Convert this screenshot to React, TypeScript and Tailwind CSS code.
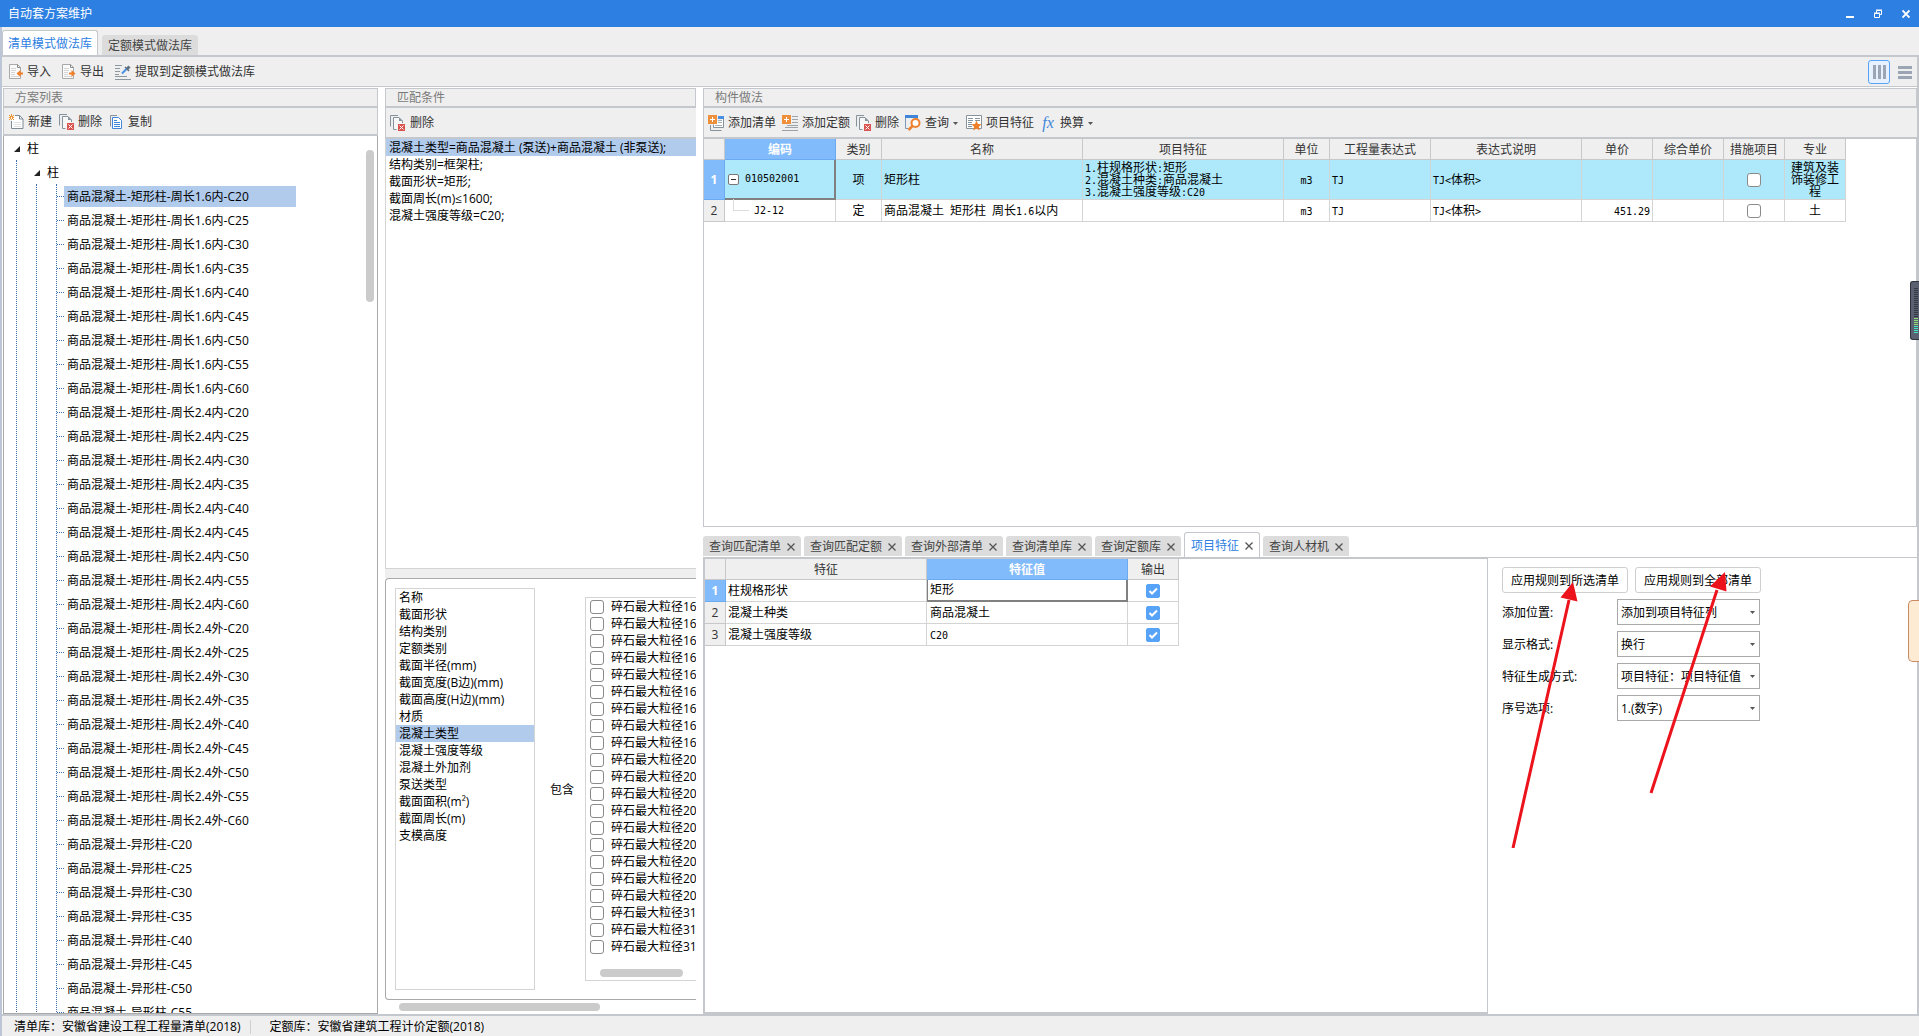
import { ReactNode } from "react";

const grades = ["C20", "C25", "C30", "C35", "C40", "C45", "C50", "C55", "C60"];

const schemes = [
  ...grades.map((g) => `商品混凝土-矩形柱-周长1.6内-${g}`),
  ...grades.map((g) => `商品混凝土-矩形柱-周长2.4内-${g}`),
  ...grades.map((g) => `商品混凝土-矩形柱-周长2.4外-${g}`),
  ...grades.slice(0, 8).map((g) => `商品混凝土-异形柱-${g}`),
];

const conditions = [
  "混凝土类型=商品混凝土 (泵送)+商品混凝土 (非泵送);",
  "结构类别=框架柱;",
  "截面形状=矩形;",
  "截面周长(m)≤1600;",
  "混凝土强度等级=C20;",
];

const attributes = [
  "名称",
  "截面形状",
  "结构类别",
  "定额类别",
  "截面半径(mm)",
  "截面宽度(B边)(mm)",
  "截面高度(H边)(mm)",
  "材质",
  "混凝土类型",
  "混凝土强度等级",
  "混凝土外加剂",
  "泵送类型",
  "截面面积(m²)",
  "截面周长(m)",
  "支模高度",
];

const aggregates = [
  ...Array(9).fill("碎石最大粒径16"),
  ...Array(9).fill("碎石最大粒径20"),
  ...Array(3).fill("碎石最大粒径31"),
];

const queryTabs = [
  { name: "查询匹配清单" },
  { name: "查询匹配定额" },
  { name: "查询外部清单" },
  { name: "查询清单库" },
  { name: "查询定额库" },
  { name: "项目特征", active: true },
  { name: "查询人材机" },
];

const features = [
  { id: 1, name: "柱规格形状", value: "矩形" },
  { id: 2, name: "混凝土种类", value: "商品混凝土" },
  { id: 3, name: "混凝土强度等级", value: "C20" },
];

const options = [
  { id: "position", label: "添加位置:", value: "添加到项目特征列" },
  { id: "format", label: "显示格式:", value: "换行" },
  { id: "mode", label: "特征生成方式:", value: "项目特征：项目特征值" },
  { id: "order", label: "序号选项:", value: "1.(数字)" },
];

const head = "h-[21px] border-r border-b border-[#c8c8c8] bg-[#efefef] pt-0.5 font-normal text-[#333]";
const headOn = "h-[21px] border-r border-b border-[#6aaaf0] bg-[#82bbfb] pt-0.5 font-bold text-white";
const cell = "border-r border-b border-[#d4d4d4]";

/* Grid text: half-width characters take half a cell, like a fixed pitch font */
function Grid({ children }: { children: string }) {
  return (
    <>
      {children.split(/([\x20-\x7e]+)/).map((part, i) =>
        i % 2 ? (
          <span key={i} className="font-['DejaVu_Sans_Mono',monospace] text-[10px] leading-2 whitespace-pre">
            {part}
          </span>
        ) : (
          part
        )
      )}
    </>
  );
}

function Icon({ children, w = 16 }: { children: ReactNode; w?: number }) {
  return (
    <svg width={w} height="16" viewBox={`0 0 ${w} 16`} fill="none" className="shrink-0" aria-hidden="true">
      {children}
    </svg>
  );
}

function ImportIcon({ out = false }: { out?: boolean }) {
  return (
    <Icon w={14}>
      <path d="M.5 .5h8l3 3v11H.5z" fill="#fafafa" stroke="#a9a9a9" />
      <path d="M8.5 .5v3h3" stroke="#8a8a8a" />
      <path d="M2 4.5h5M2 6.5h5M2 8.5h4M2 10.5h4M2 12.5h8" stroke="#d5d5d5" />
      {out ? (
        <path d="M7 8.500h2.500V6L13.500 9.500l-4 3.500v-2.500H7z" fill="#f07f2a" />
      ) : (
        <path d="M14 8.500h-2.500V6L7.500 9.500l4 3.500v-2.500H14z" fill="#f07f2a" />
      )}
    </Icon>
  );
}

function ExtractIcon() {
  return (
    <Icon>
      <path d="M0 1.500h7M0 4.500h5M0 7.500h5M0 10.500h4M0 12.500h12M0 15.500h16" stroke="#8d979f" />
      <path d="M7 9.500 11.500 5" stroke="#4a90e2" strokeWidth="2" />
      <path d="m10 3 4 4" stroke="#5f707e" strokeWidth="1.500" />
      <path d="M12 5l2.500-2.500" stroke="#5f707e" strokeWidth="3" />
    </Icon>
  );
}

function NewIcon() {
  return (
    <Icon w={15}>
      <path d="M6 1.500h4.500l3.500 3.500v9.500H2.500V7" fill="#fff" stroke="#7d8b95" />
      <path d="M10.500 1.500V5H14" stroke="#7d8b95" />
      <path d="M4.500 8.500H12M4.500 10.500H12M4.500 12.500H12" stroke="#dde1e4" />
      <path d="M0 1h1v1H0zM2 0h1v2H2zM4 1h1v1H4zM1 2h3v1H1zM0 3h2v1H0zM3 3h2v1H3zM1 4h1v1H1zM3 4h1v1H3zM0 5h1v1H0zM2 5h1v1H2zM4 5h1v1H4z" fill="#f0962e" />
    </Icon>
  );
}

function DeleteIcon({ w = 15 }: { w?: number }) {
  return (
    <Icon w={w}>
      <path d="M.5 11.500V.5H8" stroke="#87939c" />
      <path d="M6.500 14.500h-3v-12H9l3.500 3.500v2" fill="#f7f7f7" stroke="#87939c" />
      <path d="M9 2.500V6h3.500z" fill="#87939c" />
      <path d="M8 9h7v7H8z" fill="#d9534f" />
      <path d="m9.500 10.500 4 4m0-4-4 4" stroke="#fff" />
    </Icon>
  );
}

function CopyIcon() {
  return (
    <Icon w={15}>
      <path d="M1.500 12.500V1.500H8" stroke="#87939c" />
      <path d="M3.500 3.500h6l3 3v8h-9z" fill="#fff" stroke="#3f86d8" />
      <path d="M5 6.500h3M5 8.500h6M5 10.500h6M5 12.500h6" stroke="#3f86d8" />
    </Icon>
  );
}

function AddIcon({ list = false }: { list?: boolean }) {
  return (
    <Icon>
      {list ? (
        <>
          <path d="M10 1h6v3h-6z" fill="#4a90e2" />
          <path d="M15.500 4v8.500H5.500v-3" fill="#fff" stroke="#87939c" />
          <path d="M10 5.500h4M10 7.500h4M7 10.500h7" stroke="#a5b0b8" />
          <path d="M2.500 10v5.500h11" stroke="#87939c" />
        </>
      ) : (
        <path d="M10 1.500h6M10 4.500h6M10 7.500h6M5 10.500h11M3 12.500h13M0 15.500h16" stroke="#9aa3aa" />
      )}
      <path d="M0 0h9v9H0z" fill="#ee8f3c" />
      <path d="M4.500 2v5M2 4.500h5" stroke="#fff" />
    </Icon>
  );
}

function SearchIcon() {
  return (
    <Icon>
      <path d="M.5 13.500V3M.5 13.500H3M12.500 3v1" stroke="#7d97b5" />
      <path d="M0 0h13v3H0z" fill="#3f86d8" />
      <circle cx="10.500" cy="8" r="4" fill="#fff" stroke="#ee8030" strokeWidth="2" />
      <path d="m7.500 11-4 4" stroke="#ee8030" strokeWidth="2.500" />
    </Icon>
  );
}

function FeatureIcon() {
  return (
    <Icon>
      <path d="M.5 .5h15v13H.5z" fill="#fff" stroke="#87939c" />
      <path d="M2 3.500h5M2 5.500h5M2 7.500h4M2 9.500h4M2 11.500h4M9 3.500h5M9 5.500h5" stroke="#87939c" />
      <path d="m10.500 5.500 1.500 3.400 3.600.4-2.700 2.500.8 3.700-3.200-1.900-3.200 1.900.8-3.700-2.700-2.500 3.600-.4z" fill="#f07f2a" />
    </Icon>
  );
}

function Caret() {
  return (
    <svg width="5" height="3" viewBox="0 0 5 3" className="shrink-0" aria-hidden="true">
      <path d="M0 0h5L2.500 3z" fill="#555" />
    </svg>
  );
}

function Tool({ icon, label, menu }: { icon: ReactNode; label: string; menu?: boolean }) {
  return (
    <button className="flex shrink-0 items-center gap-1 text-[#333]">
      {icon}
      {label}
      {menu && (
        <span className="pr-0.5">
          <Caret />
        </span>
      )}
    </button>
  );
}

function PanelTitle({ children }: { children: string }) {
  return (
    <h2 className="h-5 shrink-0 border border-b-2 border-[#c4c7cb] bg-[#efefef] pl-[11px] leading-[17px] text-[#7a7a7a]">
      {children}
    </h2>
  );
}

function Tick({ label, on = false }: { label: string; on?: boolean }) {
  return (
    <span className="relative block size-3.5">
      <input
        type="checkbox"
        aria-label={label}
        defaultChecked={on}
        className="peer block size-3.5 appearance-none rounded-[3px] border border-[#8a8a8a] bg-white checked:rounded-xs checked:border-[#57a3f8] checked:bg-[#57a3f8]"
      />
      <svg viewBox="0 0 14 14" fill="none" className="pointer-events-none absolute inset-0 hidden size-3.5 peer-checked:block" aria-hidden="true">
        <path d="m3.500 7 2.500 2.500 5-5" stroke="#fff" strokeWidth="2" />
      </svg>
    </span>
  );
}

function TreeNode({ inner = false }: { inner?: boolean }) {
  return (
    <div className={inner ? "flex h-6 items-center gap-[7px] pt-0.5" : "flex h-6 items-center gap-[7px] pt-px pl-2.5"}>
      <svg width="6" height="6" viewBox="0 0 6 6" className={inner ? "-ml-0.5" : ""} aria-hidden="true">
        <path d="M6 0v6H0z" fill="#222" />
      </svg>
      柱
    </div>
  );
}

function SchemePanel() {
  return (
    <section className="flex w-[375px] shrink-0 flex-col">
      <PanelTitle>方案列表</PanelTitle>
      <div className="flex h-7 shrink-0 items-center gap-[7px] border-x border-b-2 border-[#c4c7cb] bg-[#efefef] pt-0.5 pl-[5px]">
        <Tool icon={<NewIcon />} label="新建" />
        <Tool icon={<DeleteIcon />} label="删除" />
        <Tool icon={<CopyIcon />} label="复制" />
      </div>
      <div className="relative min-h-0 flex-1 overflow-hidden border-x border-b border-[#a9a9a9] text-black">
        <TreeNode />
        <div className="ml-3 border-l border-dotted border-[#3f6fa8]">
          <div className="pl-[19px]">
            <TreeNode inner />
            <div className="border-l border-dotted border-[#3f6fa8] pl-[19px]">
              <ul className="border-l border-dotted border-[#3f6fa8]">
                {schemes.map((s, i) => (
                  <li key={s} className="flex h-6 items-center">
                    <span className="w-[7px] border-t border-dotted border-[#3f6fa8]" />
                    <span className={i === 0 ? "h-[21px] w-[232px] bg-[#b1cbed] pl-[3px] leading-[22px]" : "h-[21px] pl-[3px] leading-[22px]"}>
                      {s}
                    </span>
                  </li>
                ))}
              </ul>
            </div>
          </div>
        </div>
        <div className="absolute top-[14px] right-[3px] h-[152px] w-2 rounded-full bg-[#cbcbcb]" />
      </div>
    </section>
  );
}

function ConditionPanel() {
  return (
    <section className="flex w-[311px] shrink-0 flex-col overflow-hidden text-black">
      <PanelTitle>匹配条件</PanelTitle>
      <div className="flex h-[31px] shrink-0 items-center border-b-2 border-l border-[#c4c7cb] bg-[#efefef] pt-px pl-1">
        <Tool icon={<DeleteIcon w={16} />} label="删除" />
      </div>
      <ul className="h-[430px] shrink-0 border-b border-l border-[#d4d4d4]">
        {conditions.map((c, i) => (
          <li key={c} className={i === 0 ? "bg-[#b1cbed] pl-[3px] leading-[17px]" : "pl-[3px] leading-[17px]"}>
            {c}
          </li>
        ))}
      </ul>
      <div className="h-[9px] shrink-0 bg-[#efefef]" />
      <div className="flex min-h-0 flex-1 items-stretch rounded-l-sm border-y border-l border-[#a9a9a9] pl-[9px]">
        <ul className="my-[9px] w-[140px] shrink-0 border border-[#d4d4d4]">
          {attributes.map((a) => (
            <li key={a} className={a === "混凝土类型" ? "bg-[#b1cbed] pl-[3px] leading-[17px]" : "pl-[3px] leading-[17px]"}>
              {a}
            </li>
          ))}
        </ul>
        <span className="w-[50px] shrink-0 self-center pt-0.5 pl-[15px] whitespace-nowrap">包含</span>
        <div className="relative my-[18px] flex-1 overflow-hidden border-y border-l border-[#d4d4d4] pl-1">
          {aggregates.map((a, i) => (
            <label key={i} className="flex h-[17px] items-center gap-[7px] whitespace-nowrap">
              <input type="checkbox" className="size-3.5 shrink-0 appearance-none rounded-[3px] border border-[#8a8a8a] bg-white" />
              {a}
            </label>
          ))}
          <div className="absolute bottom-[3px] left-[14px] h-2 w-[83px] rounded-full bg-[#cbcbcb]" />
        </div>
      </div>
      <div className="h-[14px] shrink-0 pt-[3px] pl-[14px]">
        <div className="h-2 w-[201px] rounded-full bg-[#cbcbcb]" />
      </div>
    </section>
  );
}

function MethodTable() {
  return (
    <table className="w-[1142px] table-fixed border-separate border-spacing-0 text-black">
      <colgroup>
        <col className="w-[21px]" />
        <col className="w-[111px]" />
        <col className="w-[46px]" />
        <col className="w-[201px]" />
        <col className="w-[201px]" />
        <col className="w-[46px]" />
        <col className="w-[101px]" />
        <col className="w-[151px]" />
        <col className="w-[71px]" />
        <col className="w-[71px]" />
        <col className="w-[61px]" />
        <col className="w-[61px]" />
      </colgroup>
      <thead>
        <tr>
          <th className={head}></th>
          <th className={headOn}>编码</th>
          {["类别", "名称", "项目特征", "单位", "工程量表达式", "表达式说明", "单价", "综合单价", "措施项目", "专业"].map((h) => (
            <th key={h} className={head}>{h}</th>
          ))}
        </tr>
      </thead>
      <tbody>
        <tr className="h-10 bg-[#ade8fb] leading-3">
          <th className="border-r border-b border-[#6aaaf0] bg-[#82bbfb] text-white">1</th>
          <td className="border-r-2 border-b-2 border-[#808080] pl-[3px]">
            <div className="flex items-center gap-1.5">
              <button aria-label="折叠" className="flex size-[11px] items-center justify-center rounded-xs border border-[#777] bg-white">
                <span className="h-px w-[5px] bg-[#333]" />
              </button>
              <Grid>010502001</Grid>
            </div>
          </td>
          <td className={`${cell} text-center`}>项</td>
          <td className={`${cell} pl-0.5`}>矩形柱</td>
          <td className={`${cell} pl-0.5`}>
            <Grid>1.柱规格形状:矩形</Grid>
            <br />
            <Grid>2.混凝土种类:商品混凝土</Grid>
            <br />
            <Grid>3.混凝土强度等级:C20</Grid>
          </td>
          <td className={`${cell} text-center`}><Grid>m3</Grid></td>
          <td className={`${cell} pl-0.5`}><Grid>TJ</Grid></td>
          <td className={`${cell} pl-0.5`}><Grid>{"TJ<体积>"}</Grid></td>
          <td className={cell}></td>
          <td className={cell}></td>
          <td className={`${cell} pl-[23px]`}><Tick label="措施项目 1" /></td>
          <td className={`${cell} px-1 text-center`}>建筑及装饰装修工程</td>
        </tr>
        <tr className="h-[22px] leading-3">
          <th className="border-r border-b border-[#c8c8c8] bg-[#efefef] font-normal text-[#333]">2</th>
          <td className={cell}>
            <div className="flex items-center gap-[5px] pl-2">
              <span className="-mt-3 h-3 w-4 border-b border-l border-[#dcdcdc]" />
              <Grid>J2-12</Grid>
            </div>
          </td>
          <td className={`${cell} text-center`}>定</td>
          <td className={`${cell} pl-0.5`}><Grid>商品混凝土 矩形柱 周长1.6以内</Grid></td>
          <td className={cell}></td>
          <td className={`${cell} text-center`}><Grid>m3</Grid></td>
          <td className={`${cell} pl-0.5`}><Grid>TJ</Grid></td>
          <td className={`${cell} pl-0.5`}><Grid>{"TJ<体积>"}</Grid></td>
          <td className={`${cell} pr-0.5 text-right`}><Grid>451.29</Grid></td>
          <td className={cell}></td>
          <td className={`${cell} pl-[23px]`}><Tick label="措施项目 2" /></td>
          <td className={`${cell} text-center`}>土</td>
        </tr>
      </tbody>
    </table>
  );
}

function FeatureTable() {
  return (
    <table className="w-[474px] table-fixed border-separate border-spacing-0 text-black">
      <colgroup>
        <col className="w-[21px]" />
        <col className="w-[201px]" />
        <col className="w-[201px]" />
        <col className="w-[51px]" />
      </colgroup>
      <thead>
        <tr>
          <th className={head}></th>
          <th className={head}>特征</th>
          <th className={headOn}>特征值</th>
          <th className={head}>输出</th>
        </tr>
      </thead>
      <tbody>
        {features.map((f) => (
          <tr key={f.id} className="h-[22px] leading-3">
            <th className={f.id === 1 ? "border-r border-b border-[#6aaaf0] bg-[#82bbfb] text-white" : "border-r border-b border-[#c8c8c8] bg-[#efefef] font-normal text-[#333]"}>
              {f.id}
            </th>
            <td className={`${cell} pl-0.5`}>{f.name}</td>
            <td className={f.id === 1 ? "border-r-2 border-b-2 border-l border-[#808080] pl-0.5" : `${cell} pl-[3px]`}>
              <Grid>{f.value}</Grid>
            </td>
            <td className={`${cell} pl-[18px]`}><Tick label={`输出 ${f.name}`} on /></td>
          </tr>
        ))}
      </tbody>
    </table>
  );
}

function RulePane() {
  return (
    <div className="relative w-[429px] shrink-0 border-t border-[#c4c7cb] pt-[9px] pl-[14px] text-black">
      <div className="flex gap-[7px]">
        <button className="h-[26px] w-[126px] rounded-[3px] border border-[#cfcfcf] bg-white pt-0.5">应用规则到所选清单</button>
        <button className="h-[26px] w-[126px] rounded-[3px] border border-[#cfcfcf] bg-white pt-0.5">应用规则到全部清单</button>
      </div>
      <div className="mt-1.5 flex flex-col gap-1.5">
        {options.map((o) => (
          <div key={o.id} className="flex items-center">
            <label htmlFor={o.id} className="w-[115px] pt-0.5">{o.label}</label>
            <div className="relative w-[143px]">
              <select id={o.id} className="block h-[26px] w-full appearance-none border border-[#a9a9a9] bg-white pt-0.5 pl-[3px]">
                <option>{o.value}</option>
              </select>
              <span className="pointer-events-none absolute inset-y-0 right-[5px] flex items-center">
                <Caret />
              </span>
            </div>
          </div>
        ))}
      </div>
      {/* pointers to the two apply buttons */}
      <svg width="240" height="290" viewBox="0 0 240 290" className="pointer-events-none absolute top-0 left-0" aria-hidden="true">
        <path d="M25 290 81 42M163 235 229 32" stroke="#ec131c" strokeWidth="3" />
        <path d="M85 24 89.500 43.500 72.500 39.500zM237 14 238.500 33.500 222 28.500z" fill="#ec131c" />
      </svg>
    </div>
  );
}

function MethodPanel() {
  return (
    <section className="flex min-w-0 flex-1 flex-col">
      <PanelTitle>构件做法</PanelTitle>
      <div className="flex h-[31px] shrink-0 items-center gap-1.5 border-b-2 border-l border-[#c4c7cb] bg-[#efefef] pt-px pl-1">
        <Tool icon={<AddIcon list />} label="添加清单" />
        <Tool icon={<AddIcon />} label="添加定额" />
        <Tool icon={<DeleteIcon />} label="删除" />
        <Tool icon={<SearchIcon />} label="查询" menu />
        <Tool icon={<FeatureIcon />} label="项目特征" />
        <Tool
          icon={<span className="w-4 text-center font-['Liberation_Serif',serif] text-base leading-4 text-[#3f86d8] italic">fx</span>}
          label="换算"
          menu
        />
      </div>
      <div className="h-[388px] shrink-0 border-x border-b border-[#c4c7cb]">
        <MethodTable />
      </div>
      <div className="mt-[5px] flex shrink-0 items-end gap-[3px]">
        {queryTabs.map((t) => (
          <button
            key={t.name}
            className={
              t.active
                ? "flex h-[25px] items-center gap-1.5 rounded-t-[3px] border border-b-0 border-[#c4c7cb] bg-white px-1.5 pt-0.5 text-[#2d80e2]"
                : "mb-px flex h-5 items-center gap-1.5 rounded-t-[3px] bg-[#dcdcdc] px-1.5 pt-0.5 text-[#444]"
            }
          >
            {t.name}
            <svg width="8" height="8" viewBox="0 0 8 8" fill="none" aria-hidden="true">
              <path d="m.5.5 7 7m0-7-7 7" stroke="#555" strokeWidth="1.300" />
            </svg>
          </button>
        ))}
      </div>
      <div className="flex min-h-0 flex-1">
        <div className="min-w-0 flex-1 border-2 border-r border-[#c4c7cb]">
          <FeatureTable />
        </div>
        <RulePane />
      </div>
    </section>
  );
}

export default function App() {
  return (
    <div className="relative flex h-screen flex-col overflow-hidden bg-white font-['Open_Sans','Noto_Sans_CJK_SC',sans-serif] text-xs">
      <header className="flex h-[27px] shrink-0 items-center justify-between bg-[#2d80e2] pr-[9px] pl-2 text-white">
        <h1>自动套方案维护</h1>
        <div className="flex gap-5">
          <button aria-label="最小化">
            <svg width="8" height="10" viewBox="0 0 8 10"><path d="M0 7h8v2H0z" fill="#fff" /></svg>
          </button>
          <button aria-label="还原">
            <svg width="8" height="10" viewBox="0 0 8 10" fill="none" stroke="#fff">
              <path d="M.5 4.500h5v4h-5zM2.500 4V1.500h5v4H6M0 4h6M2 1h6" />
            </svg>
          </button>
          <button aria-label="关闭">
            <svg width="8" height="10" viewBox="0 0 8 10" fill="none" stroke="#fff">
              <path d="m.5 1.500 7 7m0-7-7 7" strokeWidth="1.800" />
            </svg>
          </button>
        </div>
      </header>

      <div className="flex min-h-0 flex-1 flex-col border-l-2 border-[#bcc6d6]">
        <nav className="flex h-[30px] shrink-0 items-end gap-1 border-b-2 border-[#c4c7cb] bg-[#efefef]">
          <button className="h-[25px] rounded-t-[3px] border border-b-0 border-[#c4c7cb] bg-white px-[5px] pt-0.5 text-[#2d80e2]">清单模式做法库</button>
          <button className="h-5 rounded-t-[3px] bg-[#dcdcdc] px-1.5 pt-0.5 text-[#444]">定额模式做法库</button>
        </nav>

        <div className="flex min-h-0 flex-1 flex-col border-r-2 border-[#c4c7cb]">
          <div className="flex h-[30px] shrink-0 items-center justify-between border-b border-[#c4c7cb] bg-[#efefef] pt-px pr-[5px] pl-[7px]">
            <div className="flex gap-[11px]">
              <Tool icon={<ImportIcon />} label="导入" />
              <Tool icon={<ImportIcon out />} label="导出" />
              <Tool icon={<ExtractIcon />} label="提取到定额模式做法库" />
            </div>
            <div className="flex items-center gap-2">
              <button aria-label="列视图" className="flex h-6 w-[22px] items-center justify-center gap-0.5 rounded-[3px] border border-[#57a3f8] bg-[#e6f1fd]">
                <span className="h-3.5 w-[3px] bg-[#9ba5b3]" />
                <span className="h-3.5 w-[3px] bg-[#9ba5b3]" />
                <span className="h-3.5 w-[3px] bg-[#9ba5b3]" />
              </button>
              <button aria-label="行视图" className="flex w-3.5 flex-col gap-0.5">
                <span className="h-[3px] bg-[#9ba5b3]" />
                <span className="h-[3px] bg-[#9ba5b3]" />
                <span className="h-[3px] bg-[#9ba5b3]" />
              </button>
            </div>
          </div>

          <main className="flex min-h-0 flex-1 gap-[7px] pt-px pl-px">
            <SchemePanel />
            <ConditionPanel />
            <MethodPanel />
          </main>
        </div>

        <footer className="flex h-[22px] shrink-0 items-center border-t-2 border-[#c4c7cb] bg-[#efefef] pt-0.5 pl-3 text-black">
          <span>清单库：安徽省建设工程工程量清单(2018)</span>
          <span className="mr-[19px] ml-[9px] h-3.5 w-px bg-[#cfcfcf]" />
          <span>定额库：安徽省建筑工程计价定额(2018)</span>
        </footer>
      </div>

      {/* meters docked to the right edge of the screen */}
      <div className="absolute top-[281px] right-0 flex h-[59px] w-[9px] flex-col items-end gap-px rounded-l-[3px] border border-r-0 border-[#2e323c] bg-[#5a6070] pt-1.5 pr-px">
        {Array.from({ length: 23 }, (_, i) => (
          <span key={i} className={i < 15 ? "h-px w-1 bg-[#343842]" : i < 19 ? "h-px w-1 bg-[#90e07a]" : "h-px w-1 bg-[#45e6c4]"} />
        ))}
      </div>
      <div className="absolute top-[600px] right-0 h-[62px] w-[11px] rounded-l-[5px] border border-r-0 border-[#c98a62] bg-[#fdebd3]" />
    </div>
  );
}
